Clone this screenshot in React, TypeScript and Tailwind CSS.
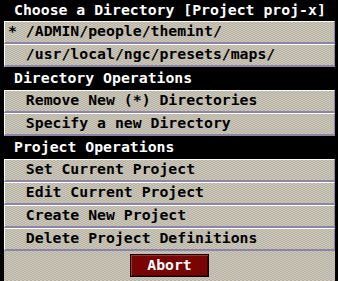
import React from "react";

const stipple =
  "bg-[#c2beb0] bg-[image:repeating-conic-gradient(#d2cca4_0_25%,#b2aebc_0_50%)] bg-[length:4px_2px]";

function Header({ text, first }: { text: string; first?: boolean }) {
  return (
    <div
      className={
        (first ? "h-[21px]" : "h-[23px]") +
        " flex items-center pl-[14px] text-white whitespace-pre"
      }
    >
      {text}
    </div>
  );
}

function Row({ text }: { text: string }) {
  return (
    <div
      className={
        stipple +
        " h-[23px] ml-[4px] mr-[3px] flex items-center pl-[3px] pb-[1px] text-black whitespace-pre border-t border-l border-t-white border-l-white border-b-2 border-r border-b-[#8d85a3] border-r-[#8d85a3]"
      }
    >
      {text}
    </div>
  );
}

export default function App() {
  return (
    <div className="w-[338px] h-[281px] bg-black flex flex-col overflow-hidden font-['DejaVu_Sans_Mono',monospace] font-bold text-[14.8px] leading-none">
      <Header text="Choose a Directory [Project proj-x]" first />
      <Row text="* /ADMIN/people/themint/" />
      <Row text="  /usr/local/ngc/presets/maps/" />
      <Header text="Directory Operations" />
      <Row text="  Remove New (*) Directories" />
      <Row text="  Specify a new Directory" />
      <Header text="Project Operations" />
      <Row text="  Set Current Project" />
      <Row text="  Edit Current Project" />
      <Row text="  Create New Project" />
      <Row text="  Delete Project Definitions" />
      <div className={stipple + " flex-1 ml-[4px] mr-[3px] flex justify-center pt-[3px]"}>
        <button className="w-[79px] h-[23px] bg-[#780404] border border-black shadow-[inset_1px_1px_0_#a83030,inset_-1px_-1px_0_#4a0000] text-white flex items-center justify-center">
          Abort
        </button>
      </div>
    </div>
  );
}
